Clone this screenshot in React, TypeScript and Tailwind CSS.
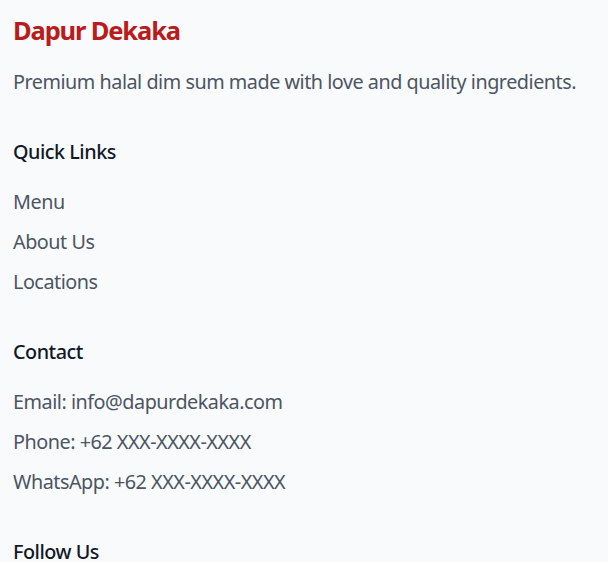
const quickLinks = ["Menu", "About Us", "Locations"];
const contact = [
  "Email: info@dapurdekaka.com",
  "Phone: +62 XXX-XXXX-XXXX",
  "WhatsApp: +62 XXX-XXXX-XXXX",
];

function Section({ title, items }: { title: string; items: string[] }) {
  return (
    <div>
      <h3 className="text-[19.8px] leading-[31px] font-medium text-[#111827] mb-[19px]">{title}</h3>
      <ul className="flex flex-col gap-[9px]">
        {items.map((item) => (
          <li key={item}>
            <a href="#" className="text-[19.8px] leading-[31px] text-[#4b5563] hover:text-[#b91c1c]">
              {item}
            </a>
          </li>
        ))}
      </ul>
    </div>
  );
}

export default function App() {
  return (
    <footer
      className="min-h-screen bg-[#f9fafb] px-[13px] pt-[13px] tracking-[-0.03em]"
      style={{ fontFamily: '"Noto Sans", "Open Sans", sans-serif' }}
    >
      <div className="flex flex-col gap-[39px]">
        <div>
          <h2 className="text-[25.5px] leading-[35px] font-bold tracking-[-0.045em] text-[#b91c1c] mb-[18px]">
            Dapur Dekaka
          </h2>
          <p className="text-[19.8px] leading-[31px] text-[#4b5563] whitespace-nowrap">
            Premium halal dim sum made with love and quality ingredients.
          </p>
        </div>
        <Section title="Quick Links" items={quickLinks} />
        <Section title="Contact" items={contact} />
        <div>
          <h3 className="text-[19.8px] leading-[31px] font-medium text-[#111827]">Follow Us</h3>
        </div>
      </div>
    </footer>
  );
}
